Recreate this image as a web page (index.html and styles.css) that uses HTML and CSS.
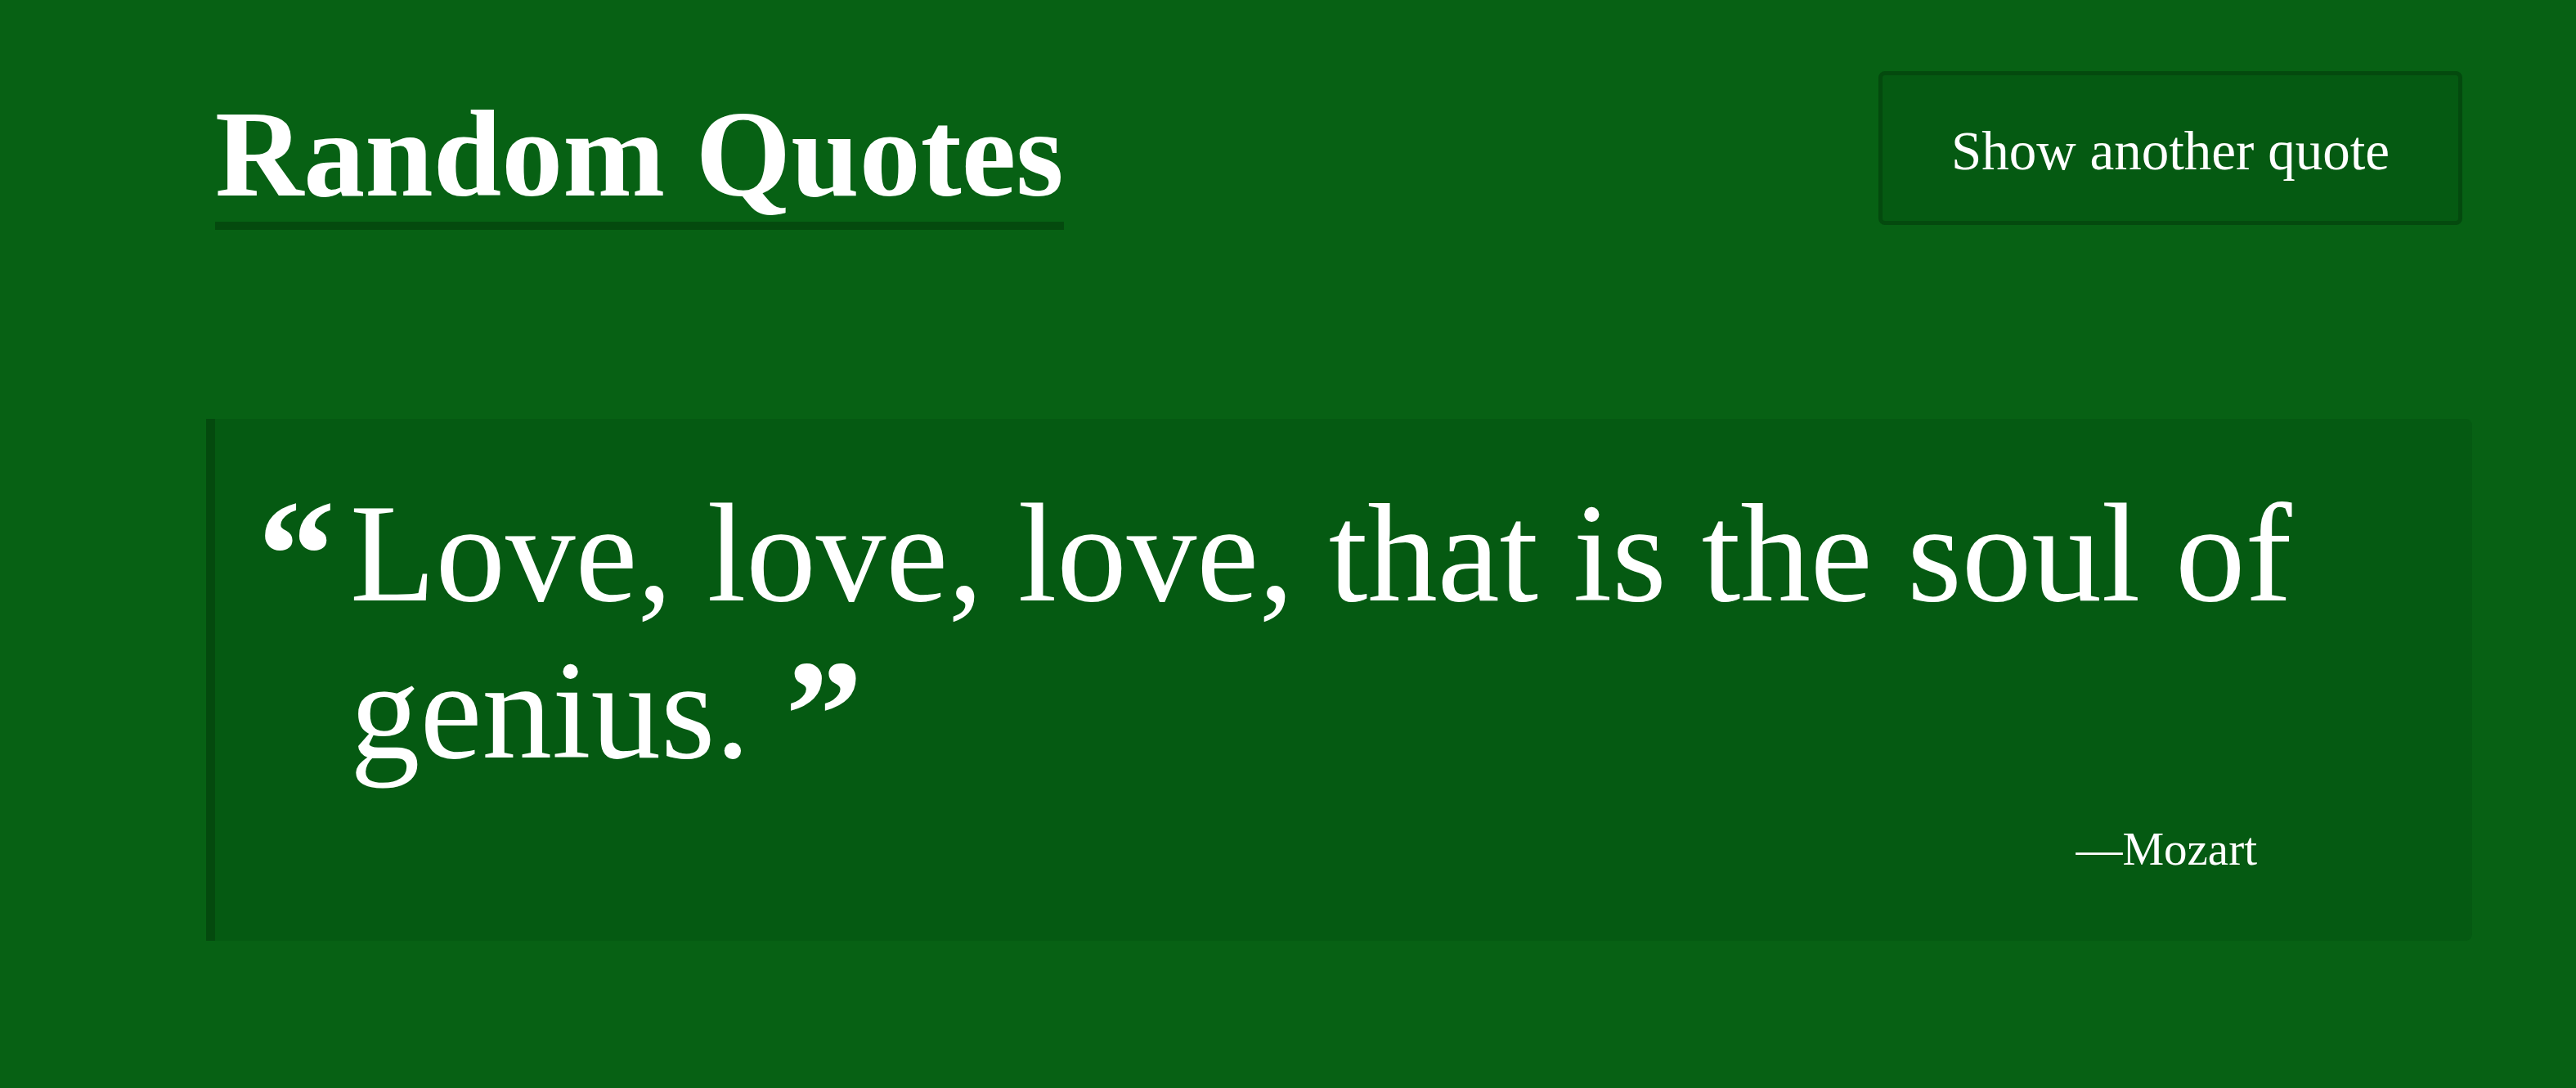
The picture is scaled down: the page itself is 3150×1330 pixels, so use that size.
FILE: index.html
```html
<!DOCTYPE html>
<html lang="en">
<head>
<meta charset="utf-8">
<title>Random Quotes</title>
<link rel="stylesheet" href="styles.css">
</head>
<body>
<main class="page">
  <header class="top">
    <h1 class="title">Random Quotes</h1>
    <button class="next" type="button">Show another quote</button>
  </header>
  <figure class="card">
    <blockquote class="quote">
      <p class="quote-text"><span class="mark open">“</span>Love, love, love, that is the soul of genius. <span class="mark close">”</span></p>
    </blockquote>
    <figcaption class="author">—Mozart</figcaption>
  </figure>
</main>
</body>
</html>
```

FILE: styles.css
```css
html, body {
  margin: 0;
  padding: 0;
}

body {
  background: #076114;
  color: #ffffff;
  font-family: "Liberation Serif", "Times New Roman", serif;
  min-height: 100vh;
}

.page {
  padding: 87px 139px 0 263px;
}

.top {
  display: flex;
  justify-content: space-between;
  align-items: flex-start;
}

.title {
  margin: 18px 0 0;
  font-weight: 700;
  font-size: 150px;
  line-height: 166px;
  border-bottom: 10px solid #044a0e;
  color: #ffffff;
}

.next {
  margin: 0;
  background: #055a12;
  color: #ffffff;
  border: 5px solid #044a0e;
  border-radius: 8px;
  padding: 51px 84px 45px;
  font-family: "Liberation Serif", "Times New Roman", serif;
  font-size: 67px;
  line-height: 82px;
  cursor: pointer;
}

.card {
  margin: 231px -12px 0 -11px;
  background: #055a12;
  border-left: 11px solid #044a0e;
  border-radius: 0 8px 8px 0;
  padding: 69px 100px 78px 52px;
}

.quote {
  margin: 0;
}

.quote-text {
  margin: 0;
  font-size: 171px;
  line-height: 192px;
  padding-left: 113px;
  text-indent: -113px;
}

.mark {
  display: inline-block;
  text-indent: 0;
  font-weight: 700;
  font-size: 190px;
  line-height: 0;
}

.mark.open {
  width: 113px;
  vertical-align: -8px;
}

.mark.close {
  vertical-align: -12px;
}

.author {
  margin: 39px 163px 0 0;
  text-align: right;
  font-size: 57px;
  line-height: 68px;
}
```
